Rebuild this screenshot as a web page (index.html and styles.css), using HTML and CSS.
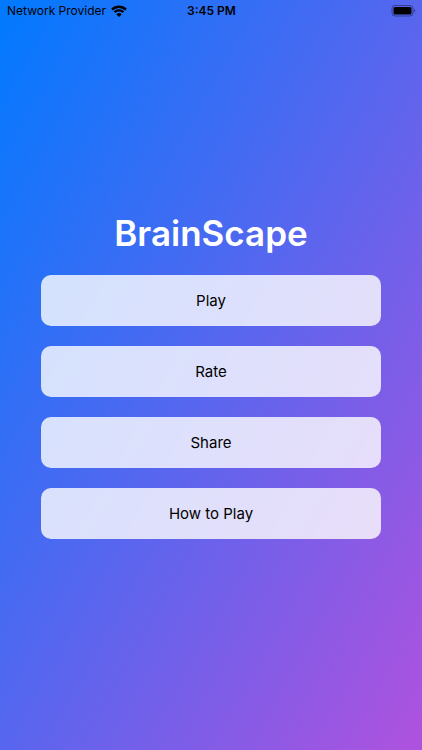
FILE: index.html
```
<!doctype html>
<html lang="en">
<head>
  <title>BrainScape</title>
  <meta charset="utf-8">
  <meta name="viewport" content="width=device-width, initial-scale=1">
  <link rel="stylesheet" href="styles.css">
</head>
<body>

<header class="statusBar">
  <div class="network">
    <span>Network Provider</span>
    <svg class="wifi" width="16" height="12" viewBox="0 0 16 12" aria-hidden="true">
      <path d="M1 4.6a9.9 9.9 0 0 1 14 0"/>
      <path d="M3.6 7.2a6.3 6.3 0 0 1 8.8 0"/>
      <path class="wifiDot" d="M8 12L5.4 9.4a3.7 3.7 0 0 1 5.2 0z"/>
    </svg>
  </div>
  <time class="clock">3:45 PM</time>
  <svg class="battery" width="25" height="12" viewBox="0 0 25 12" aria-hidden="true">
    <rect class="batteryCase" x="1" y="0.5" width="21" height="10.5" rx="3"/>
    <rect x="2.5" y="2" width="18" height="7.5" rx="1.6"/>
    <path class="batteryTip" d="M23.3 4a2.1 2.1 0 0 1 0 3.6z"/>
  </svg>
</header>

<main class="home">
  <h1 class="title">BrainScape</h1>
  <nav class="menu">
    <button class="menuButton" type="button">Play</button>
    <button class="menuButton" type="button">Rate</button>
    <button class="menuButton" type="button">Share</button>
    <button class="menuButton" type="button">How to Play</button>
  </nav>
</main>

</body>
</html>
```

FILE: styles.css
```
body {
  display: flex;
  flex-direction: column;
  min-height: 100vh;
  margin: 0;
  box-sizing: border-box;
  color: black;
  font-family: Inter, "Liberation Sans", sans-serif;
  background: linear-gradient(to bottom right, #007aff, #af52de);
}

/* status bar */
.statusBar {
  display: grid;
  grid-template-columns: 1fr auto 1fr;
  align-items: center;
  height: 21px;
  padding: 0 6px 0 7px;
  font-size: 12px;
}

.network {
  display: flex;
  align-items: center;
  gap: 5px;
}

.wifi {
  fill: none;
  stroke: black;
  stroke-width: 2.4;
}

.wifiDot {
  fill: black;
  stroke: none;
}

.clock {
  font-weight: 600;
}

.battery {
  justify-self: end;
}

.batteryCase {
  fill: none;
  stroke: black;
  stroke-opacity: 0.4;
}

.batteryTip {
  fill-opacity: 0.5;
}

/* home screen */
.home {
  display: flex;
  flex: 1;
  flex-direction: column;
  justify-content: center;
  gap: 20px;
  padding: 0 41px 21px;
}

.title {
  margin: 0;
  color: white;
  font-size: 35px;
  font-weight: 600;
  line-height: 44px;
  text-align: center;
}

.menu {
  display: flex;
  flex-direction: column;
  gap: 20px;
}

.menuButton {
  min-height: 51px;
  border: none;
  border-radius: 10px;
  color: black;
  font-family: inherit;
  font-size: 15px;
  background-color: rgba(255, 255, 255, 0.8);
  cursor: pointer;
}
```
